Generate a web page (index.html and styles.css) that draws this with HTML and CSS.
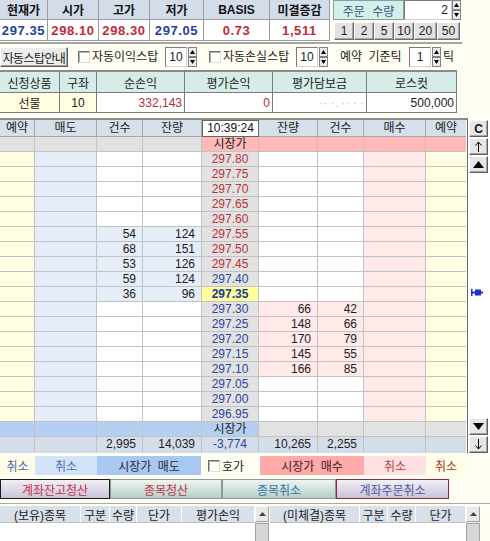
FILE: index.html
```html
<!DOCTYPE html>
<html lang="ko">
<head>
<meta charset="utf-8">
<title>주문</title>
<link rel="stylesheet" href="styles.css">
</head>
<body>
<div class="top">
  <div class="quote">
    <div class="qh">현재가</div><div class="qh">시가</div><div class="qh">고가</div><div class="qh">저가</div><div class="qh">BASIS</div><div class="qh">미결증감</div>
    <div class="qv dn">297.35</div><div class="qv up">298.10</div><div class="qv up">298.30</div><div class="qv dn">297.05</div><div class="qv up">0.73</div><div class="qv up">1,511</div>
  </div>
  <div class="order">
    <div class="order-row">
      <div class="olabel">주문 수량</div>
      <div class="inp oinp">2</div>
      <svg class="spin" width="9" height="20" viewBox="0 0 9 20"><rect width="9" height="20" fill="#c8c8c8"/><rect x="0.5" y="0.5" width="8" height="9" fill="#ececec" stroke="#808080"/><rect x="0.5" y="10.5" width="8" height="9" fill="#ececec" stroke="#808080"/><path d="M2 7 L4.5 3 L7 7Z" fill="#000"/><path d="M2 13 L4.5 17 L7 13Z" fill="#000"/></svg>
    </div>
    <div class="qty-btns">
      <div class="qb">1</div><div class="qb">2</div><div class="qb">5</div><div class="qb">10</div><div class="qb w23">20</div><div class="qb w23">50</div>
    </div>
  </div>
</div>
<div class="sep1"></div>
<div class="opts">
  <div class="btn guide">자동스탑안내</div>
  <span class="chk m10"></span><span class="lbl">자동이익스탑</span>
  <span class="inp sm">10</span>
  <svg class="spin" width="9" height="20" viewBox="0 0 9 20"><rect width="9" height="20" fill="#c8c8c8"/><rect x="0.5" y="0.5" width="8" height="9" fill="#ececec" stroke="#808080"/><rect x="0.5" y="10.5" width="8" height="9" fill="#ececec" stroke="#808080"/><path d="M2 7 L4.5 3 L7 7Z" fill="#000"/><path d="M2 13 L4.5 17 L7 13Z" fill="#000"/></svg>
  <span class="chk m12"></span><span class="lbl">자동손실스탑</span>
  <span class="inp sm">10</span>
  <svg class="spin" width="9" height="20" viewBox="0 0 9 20"><rect width="9" height="20" fill="#c8c8c8"/><rect x="0.5" y="0.5" width="8" height="9" fill="#ececec" stroke="#808080"/><rect x="0.5" y="10.5" width="8" height="9" fill="#ececec" stroke="#808080"/><path d="M2 7 L4.5 3 L7 7Z" fill="#000"/><path d="M2 13 L4.5 17 L7 13Z" fill="#000"/></svg>
  <span class="lbl lbl2">예약 기준틱</span>
  <span class="inp sm">1</span>
  <svg class="spin" width="9" height="20" viewBox="0 0 9 20"><rect width="9" height="20" fill="#c8c8c8"/><rect x="0.5" y="0.5" width="8" height="9" fill="#ececec" stroke="#808080"/><rect x="0.5" y="10.5" width="8" height="9" fill="#ececec" stroke="#808080"/><path d="M2 7 L4.5 3 L7 7Z" fill="#000"/><path d="M2 13 L4.5 17 L7 13Z" fill="#000"/></svg>
  <span class="lbl tick">틱</span>
</div>
<div class="sep2"></div>
<div class="acct">
  <div class="ah">신청상품</div><div class="ah">구좌</div><div class="ah">순손익</div><div class="ah">평가손익</div><div class="ah">평가담보금</div><div class="ah">로스컷</div>
  <div class="av yl">선물</div><div class="av yl">10</div><div class="av num red">332,143</div><div class="av num red">0</div><div class="av num blur">·· ·.   ··  · ·</div><div class="av num">500,000</div>
</div>
<div class="book">
  <div class="grid">
    <div class="r h"><div>예약</div><div>매도</div><div>건수</div><div>잔량</div><div class="tm">10:39:24</div><div>잔량</div><div>건수</div><div>매수</div><div>예약</div></div>
    <div class="r mt"><div></div><div></div><div></div><div></div><div>시장가</div><div></div><div></div><div></div><div></div></div>
    <div class="r"><div></div><div></div><div></div><div></div><div class="u">297.80</div><div></div><div></div><div></div><div></div></div>
    <div class="r"><div></div><div></div><div></div><div></div><div class="u">297.75</div><div></div><div></div><div></div><div></div></div>
    <div class="r"><div></div><div></div><div></div><div></div><div class="u">297.70</div><div></div><div></div><div></div><div></div></div>
    <div class="r"><div></div><div></div><div></div><div></div><div class="u">297.65</div><div></div><div></div><div></div><div></div></div>
    <div class="r"><div></div><div></div><div></div><div></div><div class="u">297.60</div><div></div><div></div><div></div><div></div></div>
    <div class="r"><div></div><div></div><div class="s">54</div><div class="s">124</div><div class="u">297.55</div><div></div><div></div><div></div><div></div></div>
    <div class="r"><div></div><div></div><div class="s">68</div><div class="s">151</div><div class="u">297.50</div><div></div><div></div><div></div><div></div></div>
    <div class="r"><div></div><div></div><div class="s">53</div><div class="s">126</div><div class="u">297.45</div><div></div><div></div><div></div><div></div></div>
    <div class="r"><div></div><div></div><div class="s">59</div><div class="s">124</div><div class="d">297.40</div><div></div><div></div><div></div><div></div></div>
    <div class="r"><div></div><div></div><div class="s">36</div><div class="s">96</div><div class="c">297.35</div><div></div><div></div><div></div><div></div></div>
    <div class="r"><div></div><div></div><div></div><div></div><div class="d">297.30</div><div class="b">66</div><div class="b">42</div><div></div><div></div></div>
    <div class="r"><div></div><div></div><div></div><div></div><div class="d">297.25</div><div class="b">148</div><div class="b">66</div><div></div><div></div></div>
    <div class="r"><div></div><div></div><div></div><div></div><div class="d">297.20</div><div class="b">170</div><div class="b">79</div><div></div><div></div></div>
    <div class="r"><div></div><div></div><div></div><div></div><div class="d">297.15</div><div class="b">145</div><div class="b">55</div><div></div><div></div></div>
    <div class="r"><div></div><div></div><div></div><div></div><div class="d">297.10</div><div class="b">166</div><div class="b">85</div><div></div><div></div></div>
    <div class="r"><div></div><div></div><div></div><div></div><div class="d">297.05</div><div></div><div></div><div></div><div></div></div>
    <div class="r"><div></div><div></div><div></div><div></div><div class="d">297.00</div><div></div><div></div><div></div><div></div></div>
    <div class="r"><div></div><div></div><div></div><div></div><div class="d">296.95</div><div></div><div></div><div></div><div></div></div>
    <div class="r mb"><div></div><div></div><div></div><div></div><div>시장가</div><div></div><div></div><div></div><div></div></div>
    <div class="r tot"><div></div><div></div><div>2,995</div><div>14,039</div><div class="d">-3,774</div><div>10,265</div><div>2,255</div><div></div><div></div></div>
  </div>
  <div class="vcol">
    <div class="grp">
      <div class="sb bold">C</div>
      <div class="sb"><svg width="9" height="11" viewBox="0 0 9 11"><path d="M4.5 1 V11 M4.5 1 L1.5 4.5 M4.5 1 L7.5 4.5" stroke="#000" stroke-width="1" fill="none"/></svg></div>
      <div class="sb"><svg width="11" height="7" viewBox="0 0 11 7"><path d="M5.5 0 L11 7 L0 7Z" fill="#000"/></svg></div>
    </div>
    <div class="grp">
      <div class="sb"><svg width="11" height="7" viewBox="0 0 11 7"><path d="M0 0 L11 0 L5.5 7Z" fill="#000"/></svg></div>
      <div class="sb"><svg width="9" height="11" viewBox="0 0 9 11"><path d="M4.5 0 V10 M4.5 10 L1.5 6.5 M4.5 10 L7.5 6.5" stroke="#000" stroke-width="1" fill="none"/></svg></div>
    </div>
    <svg class="marker" width="13" height="9" viewBox="0 0 13 9"><rect x="0" y="1" width="1.5" height="7" fill="#1c2fd0"/><rect x="0" y="3.5" width="12" height="2" fill="#1c2fd0"/><rect x="4" y="1.5" width="6" height="6" fill="#1c2fd0"/></svg>
  </div>
</div>
<div class="acts">
  <div class="a a1">취소</div>
  <div class="a a2">취소</div>
  <div class="a a3">시장가 매도</div>
  <div class="a a4"><span class="chk"></span><span class="hoga">호가</span></div>
  <div class="a a5">시장가 매수</div>
  <div class="a a6">취소</div>
  <div class="a a7">취소</div>
</div>
<div class="clr">
  <div class="cb cb1">계좌잔고청산</div>
  <div class="cb cb2">종목청산</div>
  <div class="cb cb3">종목취소</div>
  <div class="cb cb4">계좌주문취소</div>
</div>
<div class="lists">
  <div class="panel left">
    <div class="ltab">
      <div class="lh"><div class="w81">(보유)종목</div><div class="w29">구분</div><div class="w27">수량</div><div class="w45">단가</div><div class="w73">평가손익</div></div>
      <div class="lbody"></div>
    </div>
    <div class="scr"><div class="sup"><svg width="7" height="4" viewBox="0 0 7 4"><path d="M3.5 0 L7 4 L0 4Z" fill="#444"/></svg></div><div class="thumb"></div></div>
  </div>
  <div class="panel right">
    <div class="ltab">
      <div class="lh"><div class="w90">(미체결)종목</div><div class="w28">구분</div><div class="w28">수량</div><div class="w50">단가</div></div>
      <div class="lbody"></div>
    </div>
    <div class="scr"><div class="sup"><svg width="7" height="4" viewBox="0 0 7 4"><path d="M3.5 0 L7 4 L0 4Z" fill="#444"/></svg></div><div class="thumb"></div></div>
  </div>
</div>
</body>
</html>
```
FILE: styles.css
```css
* { box-sizing: border-box; margin: 0; padding: 0; }
body {
  background: #fffef2;
  font-family: "Liberation Sans", "Noto Sans CJK KR", sans-serif;
  font-size: 12px;
  color: #1c1c1c;
  width: 490px;
  height: 541px;
  overflow: hidden;
}

/* top quote */
.top { display: flex; height: 42px; }
.quote {
  display: grid;
  grid-template-columns: 48px 51px 51px 54px 66px 60px;
  grid-template-rows: 20px 21px;
  width: 330px;
}
.quote > div {
  border-right: 1px solid #9c9c9c;
  border-bottom: 1px solid #9c9c9c;
  display: flex; align-items: center; justify-content: center;
}
.qh { background: #d3dde9; font-weight: bold; font-size: 12px; color: #111; }
.qv { background: #fff; font-weight: bold; font-size: 13px; letter-spacing: 0.6px; }
.up { color: #c02b36; }
.dn { color: #1f3f9f; }

.order { margin-left: 3px; width: 129px; }
.order-row { display: flex; height: 20px; }
.olabel {
  width: 71px; height: 20px;
  background: #d3efeb;
  border: 1px solid #8aa0a0;
  color: #2f5b7c;
  display: flex; align-items: center; justify-content: center;
  word-spacing: 4px;
}
.inp {
  background: #fff;
  border: 1px solid #7a7a7a;
  border-right-color: #d0d0d0; border-bottom-color: #d0d0d0;
  height: 20px;
  display: flex; align-items: center; justify-content: center;
}
.oinp { width: 48px; justify-content: flex-end; padding-right: 3px; }
.spin { display: block; flex: none; }
.qty-btns { display: flex; margin-top: 2px; margin-left: 1px; height: 18px; }
.qb {
  width: 20px; height: 18px;
  background: #e2e2e2;
  border: 1px solid; border-color: #fff #6c6c6c #6c6c6c #fff;
  box-shadow: inset -1px -1px 0 #a8a8a8;
  display: flex; align-items: center; justify-content: center;
  font-size: 12px; color: #222;
}
.qb.w23 { width: 23px; }

.sep1 { height: 2px; width: 462px; background: #a5a5a5; }

/* option row */
.opts { display: flex; align-items: center; height: 26px; }
.btn.guide {
  width: 68px; height: 20px;
  background: #ececec;
  border: 1px solid; border-color: #fff #5c5c5c #5c5c5c #fff;
  box-shadow: inset -1px -1px 0 #a0a0a0;
  display: flex; align-items: center; justify-content: center;
  letter-spacing: -0.6px; white-space: nowrap;
}
.chk {
  display: inline-block; width: 12px; height: 12px; flex: none;
  background: #fff;
  border: 1px solid; border-color: #6e6e6e #dcdcdc #dcdcdc #6e6e6e;
  box-shadow: inset 1px 1px 0 #b4b4b4;
}
.m10 { margin-left: 10px; }
.m12 { margin-left: 12px; }
.lbl { margin-left: 2px; width: 73px; white-space: nowrap; line-height: 20px; }
.inp.sm { width: 22px; margin-right: 1px; }
.lbl2 { margin-left: 12px; width: 69px; word-spacing: 3px; }
.tick { width: auto; }

.sep2 { height: 2px; width: 457px; background: #8a8a8a; }

/* account table */
.acct {
  display: grid;
  grid-template-columns: 60px 37px 88px 88px 94px 90px;
  grid-template-rows: 21px 20px;
  width: 457px;
}
.acct > div {
  border-right: 1px solid #7c7c7c;
  border-bottom: 1px solid #7c7c7c;
  display: flex; align-items: center; justify-content: center;
  white-space: nowrap;
}
.ah { background: #d5ece9; color: #1c1c1c; }
.av { background: #fff; }
.av.yl { background: #fffee2; }
.av.num { justify-content: flex-end; padding-right: 2px; }
.red { color: #b53038; }
.blur { color: #c4c4c4; }

/* order book */
.book { display: flex; margin-top: 5px; height: 335px; }
.grid { width: 468px; border-top: 2px solid #8c8c8c; border-right: 1px solid #6a6a6a; }
.r {
  display: grid;
  grid-template-columns: 35px 62px 46px 59px 57px 59px 46px 62px 40px;
  height: 15px;
}
.r > div {
  border-right: 1px solid #c2c2c2;
  border-bottom: 1px solid #c2c2c2;
  line-height: 14px;
  text-align: right;
  padding-right: 6px;
  white-space: nowrap;
  overflow: hidden;
}
.r > div:nth-child(9) { border-right: none; }
.r > div:nth-child(1), .r > div:nth-child(9) { background: #fffee3; }
.r > div:nth-child(2) { background: #e4edf8; }
.r > div:nth-child(3), .r > div:nth-child(4), .r > div:nth-child(6), .r > div:nth-child(7) { background: #fff; }
.r > div:nth-child(5) { background: #e2e2e2; text-align: center; padding: 0; }
.r > div:nth-child(8) { background: #ffe9e9; }
.r > div.s { background: #e4edf8; }
.r > div.b { background: #ffe9e9; }
.r > div.u { color: #b8323a; }
.r > div.d { color: #2a46a0; }
.r > div.c { background: #ffff99; color: #1a3a9a; font-weight: bold; }

.r.h { height: 17px; }
.r.h > div { background: #d6e0eb; text-align: center; padding: 0; line-height: 16px; color: #222; border-color: #a8a8a8; }
.r.h > div.tm { background: #fff; border: 1px solid #666; line-height: 15px; color: #111; }
.r.mt > div { background: #e2e2e2; }
.r.mt > div:nth-child(n+5) { background: #ffb9b9; }
.r.mt > div:nth-child(5) { color: #222; }
.r.mb > div { background: #b5cff3; }
.r.mb > div:nth-child(n+6) { background: #e2e2e2; }
.r.mb > div:nth-child(5) { color: #222; }
.r.tot { height: 16px; }
.r.tot > div { background: #d4deea; line-height: 15px; border-bottom: none; }
.r.tot > div:nth-child(5) { background: #d4deea; }

.vcol {
  position: relative;
  width: 22px;
  background: #fff;
  padding: 2px 0 0 1px;
  display: flex; flex-direction: column; justify-content: space-between;
}
.grp { display: flex; flex-direction: column; gap: 1px; }
.sb {
  width: 19px; height: 17px;
  background: #e6e6e6;
  border: 1px solid; border-color: #fff #5e5e5e #5e5e5e #fff;
  box-shadow: inset -1px -1px 0 #a6a6a6;
  display: flex; align-items: center; justify-content: center;
  font-size: 12px; line-height: 1; color: #111;
}
.sb svg { display: block; }
.sb.bold { font-weight: bold; }
.marker { position: absolute; left: 3px; top: 170px; }

/* action row */
.acts { display: flex; margin-top: 3px; height: 19px; }
.a { display: flex; align-items: center; justify-content: center; white-space: nowrap; }
.a1 { width: 35px; background: #fffde6; color: #4a68a0; }
.a2 { width: 62px; background: #d4e4f8; color: #4a72b0; }
.a3 { width: 104px; background: #a9c8f1; color: #2a2a3a; word-spacing: 3px; }
.a4 { width: 59px; justify-content: flex-start; padding-left: 7px; }
.a4 .hoga { margin-left: 2px; }
.a5 { width: 104px; background: #ffa9a9; color: #3a2020; word-spacing: 3px; }
.a6 { width: 62px; background: #ffe1e1; color: #c03a4a; }
.a7 { width: 40px; background: #fffde4; color: #a53a3a; }

/* clear buttons */
.clr { display: flex; margin-top: 4px; height: 20px; }
.cb {
  display: flex; align-items: center; justify-content: center;
  height: 20px; white-space: nowrap;
  border: 1px solid #8a9a96;
}
.cb1 { width: 110px; background: linear-gradient(#f2eff6, #c9c3da); border-color: #1a1a1a; color: #c2304a; }
.cb2 { width: 112px; background: linear-gradient(#eef6f2, #b6cec5); color: #c2304a; }
.cb3 { width: 114px; background: linear-gradient(#eef6f2, #b6cec5); color: #3276a6; }
.cb4 { width: 113px; background: linear-gradient(#f2eff6, #c9c3da); border-color: #8c2848; color: #4c58a2; }

/* bottom lists */
.lists { display: flex; margin-top: 4px; border-top: 1px solid #a8a8a8; padding-top: 2px; height: 40px; }
.panel { display: flex; }
.panel.left { width: 270px; }
.panel.right { width: 210px; }
.left .ltab { width: 255px; }
.right .ltab { width: 196px; }
.ltab { background: #fff; }
.lh { display: flex; height: 17px; background: #d8e0ea; border-bottom: 1px solid #b8c0c8; }
.lh > div {
  border-right: 1px solid #fff;
  display: flex; align-items: center; justify-content: center;
  white-space: nowrap; color: #1c1c1c;
}
.w81 { width: 81px; } .w29 { width: 29px; } .w27 { width: 27px; } .w45 { width: 45px; } .w73 { width: 73px; }
.w90 { width: 90px; } .w28 { width: 28px; } .w50 { width: 50px; }
.lbody { height: 30px; background: #fff; }
.scr { width: 14px; background: #ececec; display: flex; flex-direction: column; }
.sup {
  height: 16px;
  background: #e8e8e8;
  border: 1px solid; border-color: #fafafa #a0a0a0 #a0a0a0 #fafafa;
  display: flex; align-items: center; justify-content: center;
}
.sup svg { display: block; }
.thumb { margin-top: 1px; flex: 1; background: #d6d6d6; border: 1px solid #a4a4a4; border-bottom: none; }
```
